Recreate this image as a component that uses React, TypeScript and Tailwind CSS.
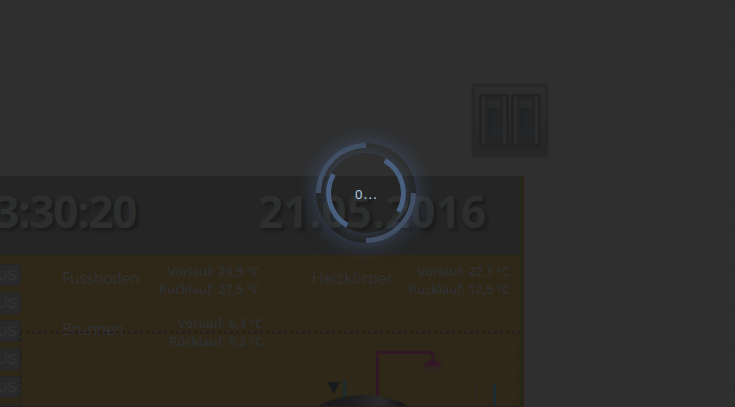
import type { ReactNode } from "react";

const base = "absolute whitespace-nowrap leading-none";

function Label({ className, children }: { className: string; children: ReactNode }) {
  return <span className={`${base} ${className}`}>{children}</span>;
}

function Rocker() {
  return (
    <div className="flex h-[53px] w-[30px] shrink-0 items-center justify-center border-[3px] border-[#232323] bg-[#2c2c2c]">
      <div className="flex h-[47px] w-[18px] shrink-0 flex-col border-[3px] border-b-[4px] border-[#242424] bg-[#292a2a]">
        <div className="h-[8px] bg-[#282a29]" />
        <div className="h-[32px] bg-linear-to-br from-[#1f2123] to-[#25282a]" />
      </div>
    </div>
  );
}

function Readings({ className, supply, back }: { className: string; supply: string; back: string }) {
  return (
    <div className={`absolute flex flex-col items-end text-[13px] font-semibold text-[#2e3132] ${className}`}>
      <span className="h-[18px] leading-[18px] whitespace-nowrap">Vorlauf: {supply} °C</span>
      <span className="h-[18px] leading-[18px] whitespace-nowrap">Rücklauf: {back} °C</span>
    </div>
  );
}

function Piping() {
  return (
    <svg className="absolute top-0 left-0" width="520" height="152" viewBox="0 255 520 152" fill="none">
      <path d="M377.5 398V352.5H433V361" stroke="#321727" strokeWidth="3" />
      <path d="M424 366C427 361 430 360 433 360C436 360 439 361 442 366Z" fill="#321727" />
      <path d="M424 369H442" stroke="#32202a" strokeWidth="5" strokeDasharray="1 1" />
      <path d="M327.500 382H340L333.500 394Z" fill="#171b1c" />
      <path d="M344.500 380V400" stroke="#1b2b2d" strokeWidth="3" />
      <path d="M475.500 384V406" stroke="#302528" strokeWidth="1" />
      <path d="M494.500 384V407" stroke="#1b2b2f" strokeWidth="3" />
      <ellipse cx="363" cy="421" rx="54" ry="26" fill="url(#tank)" />
      <path d="M20 332.500H520" stroke="#231d20" strokeWidth="2" strokeDasharray="3 3" />
      <path d="M518.500 333V407" stroke="#22201f" strokeWidth="1" strokeDasharray="3 3" />
      <path d="M20.500 333V407" stroke="#171c20" strokeWidth="1" strokeDasharray="3 3" />
      <path d="M0 406.500H520" stroke="#271f20" strokeWidth="1" />
      <defs>
        <linearGradient id="tank" x1="310" y1="0" x2="416" y2="0" gradientUnits="userSpaceOnUse">
          <stop stopColor="#1a1a1a" />
          <stop offset=".4" stopColor="#1e1e1e" />
          <stop offset=".68" stopColor="#2b2b2b" />
          <stop offset=".85" stopColor="#181818" />
        </linearGradient>
      </defs>
    </svg>
  );
}

function Spinner() {
  return (
    <div className="absolute top-[143px] left-[316px] size-[100px]">
      <div className="absolute inset-0 rotate-45 rounded-full border-5 border-y-transparent border-x-[#425065] shadow-[0_0_20px_#466189a6]" />
      <div className="absolute inset-[10px] -rotate-15 rounded-full border-5 border-y-transparent border-x-[#4a6080] shadow-[0_0_12px_#46618980]" />
      <span className="absolute top-[44px] left-[39px] font-['Open_Sans',sans-serif] text-[13px] leading-[14px] tracking-[1.3px] text-[#c3ccd2] [text-shadow:0_0_2px_#17507f]">
        0...
      </span>
    </div>
  );
}

export default function App() {
  return (
    <main className="relative flex h-[407px] w-[735px] flex-col overflow-hidden border-r border-dashed border-[#292929] bg-[#2f2f2f] font-['Open_Sans',sans-serif]">
      <section className="flex h-[176px] shrink-0 justify-end pt-[84px] pr-[186px]">
        <div className="flex h-[73px] w-[76px] items-center justify-center gap-[2px] border-[3px] border-[#272727] bg-linear-to-b from-[#2d2d2d] to-[#262626] shadow-[0_0_2px_#292929]">
          <Rocker />
          <Rocker />
        </div>
      </section>
      <section className="flex h-[231px] w-[524px] border-r border-[#33231b]">
        <div className="flex w-[520px] flex-col">
          <header className="relative h-[79px] shrink-0 bg-[#252525] text-[44px] font-bold text-[#2d2f2f] [text-shadow:3px_3px_3px_#1c1c1c]">
            <Label className="top-[13px] right-[384px] tracking-[-1.3px]">13:30:20</Label>
            <Label className="top-[13px] left-[258px] tracking-[0.2px]">21.05.2016</Label>
          </header>
          <div className="relative flex-1 overflow-hidden bg-[#2f2718]">
            <div className="flex flex-col gap-[6px] pt-[9px]">
              {[0, 1, 2, 3, 4, 5].map((row) => (
                <div
                  key={row}
                  className="flex h-[22px] w-[21px] shrink-0 items-center justify-end rounded-r-[4px] border border-l-0 border-[#252525] bg-[#292929] pr-[3px] font-['Liberation_Sans',sans-serif] text-[14px] leading-none text-[#343434]"
                >
                  AUS
                </div>
              ))}
            </div>
            <Label className="top-[15px] left-[62px] text-[16px] font-medium tracking-[-0.4px] text-[#2f3233]">Fussboden</Label>
            <Label className="top-[15px] left-[312px] text-[16px] font-medium tracking-[-0.1px] text-[#2f3233]">Heizkörper</Label>
            <Label className="top-[66px] left-[62px] text-[16px] font-medium tracking-[-0.5px] text-[#2f3233]">Brunnen</Label>
            <Readings className="top-[7px] right-[260px] tracking-[-0.2px]" supply="29,9" back="27,5" />
            <Readings className="top-[7px] right-[10px] tracking-[-0.2px]" supply="22,1" back="12,5" />
            <Readings className="top-[59px] right-[257px] tracking-[-0.2px]" supply="6,3" back="5,2" />
            <Piping />
          </div>
        </div>
        <div className="w-[2px] bg-[#242a16]" />
        <div className="w-px bg-[#252015]" />
      </section>
      <Spinner />
    </main>
  );
}
